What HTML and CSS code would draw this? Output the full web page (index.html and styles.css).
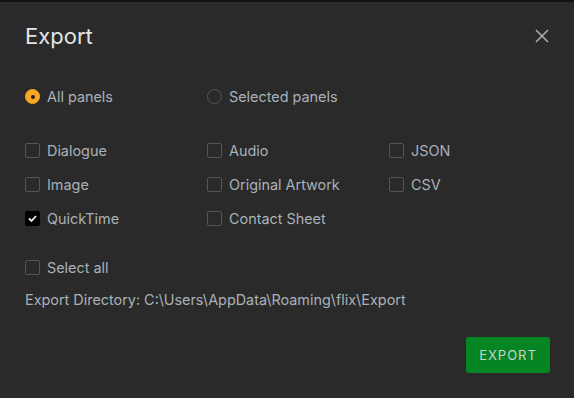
FILE: index.html
```html
<!DOCTYPE html>
<html lang="en">
<head>
    <meta charset="utf-8" />
    <title>Export</title>
    <link rel="stylesheet" href="styles.css">
</head>
<body>
<div class="dialog">
    <div class="header">
        <h1>Export</h1>
        <button class="close" aria-label="Close">
            <svg width="14" height="14" viewBox="0 0 14 14"><path d="M1 1 L13 13 M13 1 L1 13" stroke="#a9b2ba" stroke-width="1.5" fill="none"/></svg>
        </button>
    </div>

    <div class="radios">
        <label class="opt"><span class="radio on"></span>All panels</label>
        <label class="opt"><span class="radio"></span>Selected panels</label>
    </div>

    <div class="grid">
        <label class="opt"><span class="box"></span>Dialogue</label>
        <label class="opt"><span class="box"></span>Audio</label>
        <label class="opt"><span class="box"></span>JSON</label>
        <label class="opt"><span class="box"></span>Image</label>
        <label class="opt"><span class="box"></span>Original Artwork</label>
        <label class="opt"><span class="box"></span>CSV</label>
        <label class="opt"><span class="box on">
            <svg width="11" height="11" viewBox="0 0 11 11"><path d="M2 5.5 L4.5 8 L9 3" stroke="#f2f2f2" stroke-width="1.8" fill="none"/></svg>
        </span>QuickTime</label>
        <label class="opt"><span class="box"></span>Contact Sheet</label>
    </div>

    <label class="opt select-all"><span class="box"></span>Select all</label>

    <p class="dir">Export Directory: C:\Users\AppData\Roaming\flix\Export</p>

    <div class="footer">
        <button class="export">EXPORT</button>
    </div>
</div>
</body>
</html>
```

FILE: styles.css
```css
html, body {
    margin: 0;
    background-color: #2a2a2a;
}

body {
    border-top: 2px solid #111;
    font-family: 'Inter', sans-serif;
    font-size: 14.4px;
    color: #a9b1b8;
}

.dialog {
    padding: 0 24px 0 25px;
}

.header {
    display: flex;
    justify-content: space-between;
    align-items: center;
    height: 68px;
}

h1 {
    margin: 0;
    font-weight: normal;
    font-size: 22px;
    color: #e2e4e6;
}

.close {
    background: none;
    border: 0;
    padding: 0;
    margin-right: 1px;
    width: 14px;
    height: 14px;
    display: flex;
}

.opt {
    display: flex;
    align-items: center;
    gap: 7px;
    height: 20px;
}

.radios {
    display: flex;
    margin-top: 16px;
}

.radios .opt {
    width: 182px;
}

.radio {
    width: 13px;
    height: 13px;
    border: 1px solid #555;
    border-radius: 50%;
    box-sizing: content-box;
}

.radio.on {
    background: #f7a823;
    border-color: #f7a823;
    position: relative;
}

.radio.on::after {
    content: "";
    position: absolute;
    left: 5px;
    top: 5px;
    width: 4px;
    height: 4px;
    border-radius: 50%;
    background: #222;
}

.grid {
    display: grid;
    grid-template-columns: 182px 182px 1fr;
    row-gap: 14px;
    margin-top: 34px;
}

.box {
    width: 13px;
    height: 13px;
    border: 1px solid #555;
    border-radius: 2px;
    display: flex;
    align-items: center;
    justify-content: center;
}

.box.on {
    background: #000;
    border-color: #000;
}

.select-all {
    margin-top: 29px;
}

.dir {
    margin: 13px 0 0;
    line-height: 20px;
}

.footer {
    display: flex;
    justify-content: flex-end;
    margin-top: 27px;
}

.export {
    background: #058523;
    border: 0;
    border-radius: 2px;
    width: 84px;
    height: 36px;
    color: #c9d2c8;
    font-family: 'Inter', sans-serif;
    font-size: 13px;
    letter-spacing: 1px;
}
```
